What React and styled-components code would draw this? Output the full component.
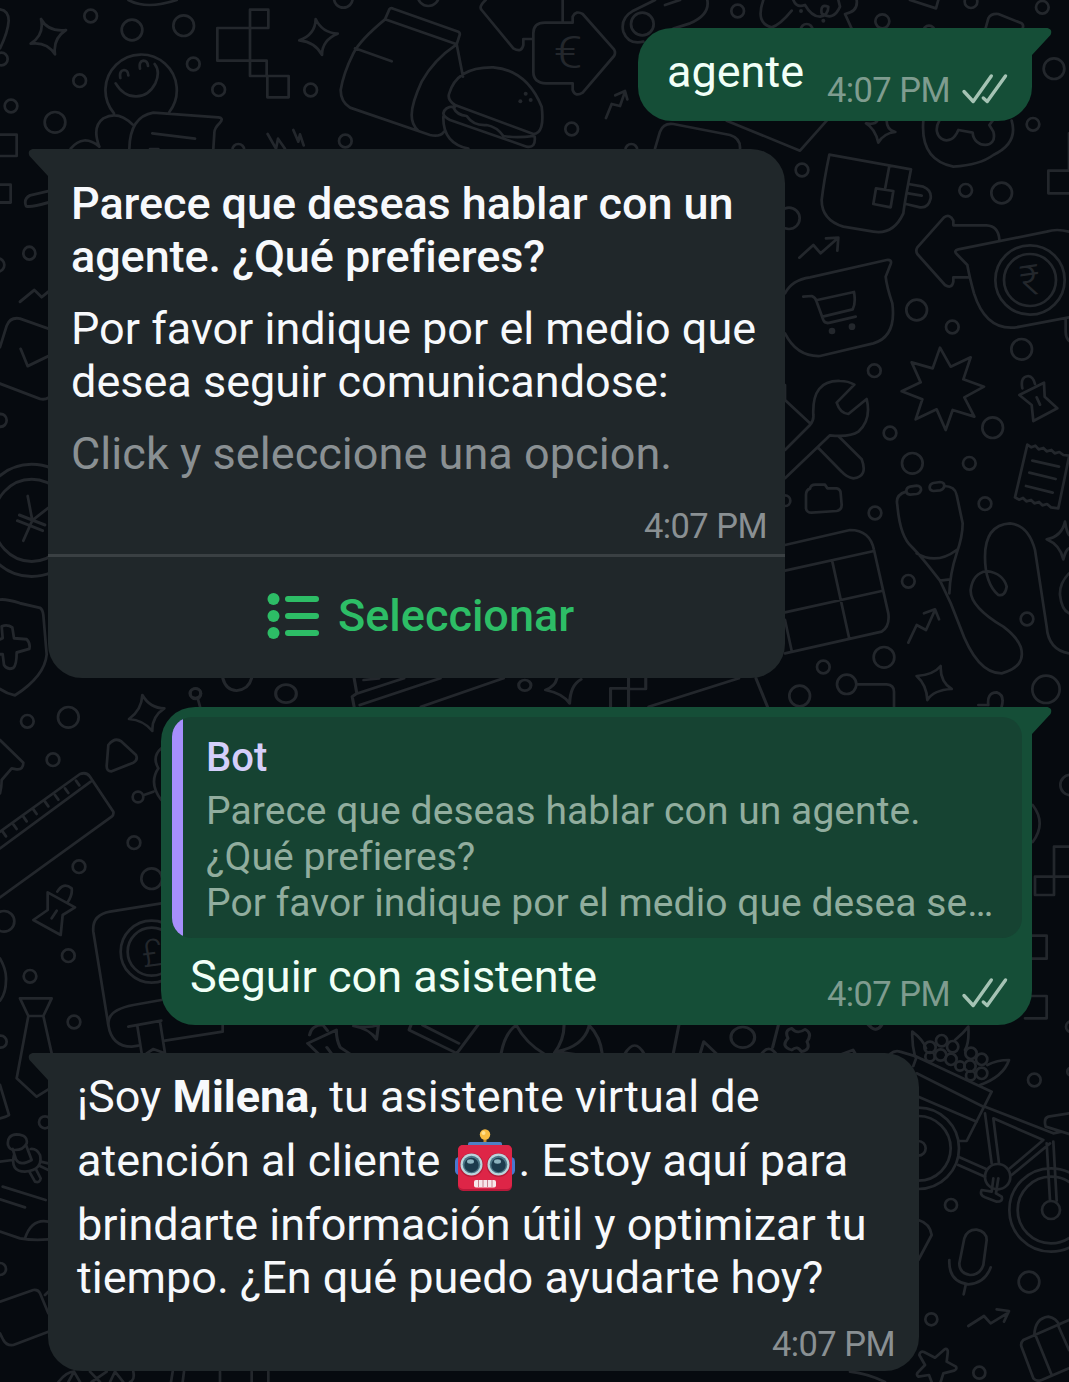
import React from "react";
import styled, { createGlobalStyle } from "styled-components";

const GlobalStyle = createGlobalStyle`
  *, *::before, *::after { box-sizing: border-box; }
  html, body { margin: 0; background: #060a0f; }
  body { font-family: Roboto, "Noto Sans", sans-serif; }
`;

const Screen = styled.main`
  position: relative;
  width: 1069px;
  height: 1382px;
  overflow: hidden;
  background: #060a0f;
`;

const Doodles = styled.svg`
  position: absolute;
  inset: 0;
  fill: none;
  stroke: #23272c;
  stroke-linecap: round;
  stroke-linejoin: round;

  text {
    fill: #23272c;
    stroke: none;
    text-anchor: middle;
    font-family: Roboto, sans-serif;
  }
`;

const Thread = styled.section`
  position: relative;
  display: flex;
  flex-direction: column;
  gap: 28px;
  padding: 28px 37px 0 48px;
`;

const Bubble = styled.article`
  position: relative;
  display: flex;
  flex-direction: column;
  align-self: ${(p) => (p.$out ? "flex-end" : "flex-start")};
  width: ${(p) => p.$width}px;
  height: ${(p) => p.$height}px;
  margin-top: ${(p) => p.$drop || 0}px;
  border-radius: ${(p) => (p.$out ? "34px 0 34px 34px" : "0 34px 34px 34px")};
  background: ${(p) => (p.$out ? "#154e37" : "#20272a")};
  color: ${(p) => (p.$out ? "#f1fff7" : "#f7f9fc")};
  white-space: nowrap;
`;

const TailShape = styled.svg`
  position: absolute;
  top: 0;
  ${(p) => (p.$out ? "right: -20px;" : "left: -20px; transform: scaleX(-1);")}
  fill: ${(p) => (p.$out ? "#154e37" : "#20272a")};
`;

const Text = styled.p`
  margin: 0;
  font-size: 45px;
  line-height: 53px;
  letter-spacing: ${(p) => p.$track || 0}px;
  font-weight: ${(p) => (p.$strong ? 500 : 400)};
  color: ${(p) => (p.$muted ? "#8a9093" : "inherit")};

  b { font-weight: 700; }
`;

const InlineRow = styled.div`
  display: flex;
  flex: 1;
  justify-content: space-between;
  padding: ${(p) => p.$pad};
`;

const Stack = styled.div`
  display: flex;
  flex-direction: column;
  gap: 19px;
  height: ${(p) => p.$height}px;
  padding: ${(p) => p.$pad};
`;

const Meta = styled.div`
  display: flex;
  align-items: center;
  align-self: flex-end;
  gap: 11px;
  margin-top: auto;
  color: ${(p) => (p.$out ? "#7f9c8f" : "#8a9093")};
  font-size: 34.5px;
  letter-spacing: -0.55px;
  line-height: 40px;
`;

const TickIcon = styled.svg`
  margin-bottom: 5px;
  fill: none;
  stroke: #a5c3b4;
  stroke-width: 3.4;
  stroke-linecap: round;
  stroke-linejoin: round;
`;

const ListButton = styled.button`
  display: flex;
  flex: 1;
  align-items: center;
  gap: 18px;
  padding: 0 0 4px 219px;
  border: 0;
  border-top: 3px solid #3a4043;
  background: none;
  color: #2dbd66;
  font: 500 45px/53px Roboto, sans-serif;
`;

const Quote = styled.blockquote`
  display: flex;
  width: 850px;
  height: 221px;
  margin: 10px 0 0 11px;
  overflow: hidden;
  border-radius: 20px;
  background: #164332;
`;

const QuoteBar = styled.span`
  width: 11px;
  background: #a68ffb;
`;

const QuoteBody = styled.div`
  padding: 18px 0 0 23px;
  color: #91ad9e;
  font-size: 39px;
  letter-spacing: 0.06px;
  line-height: 46px;
`;

const QuoteAuthor = styled.div`
  margin-bottom: 7px;
  color: #d5cffa;
  font-size: 40px;
  font-weight: 500;
`;

const Emoji = styled.svg`
  display: inline-block;
  width: 62px;
  height: 75px;
  margin: 0 3px 0 2px;
  vertical-align: -22px;
`;

const spots = [
  // circles grouped by wallpaper block, in block units
  { at: [0, 0], dots: [[272,48,19],[396,90,31],[551,77,31],[580,192,19],[239,242,19],[33,318,19],[165,367,31],[656,269,19],[932,270,19],[1036,423,19],[715,450,18],[4,177,19]],
    lines: "M0 28Q26 32 26 62Q24 96 0 145M123 57Q144 96 198 90Q158 116 165 163Q140 124 92 131Q134 104 123 57ZM947 57Q966 98 1013 101Q966 120 966 165Q946 126 898 121Q946 104 947 57ZM750 29h55v55h-55zM652 84h98v98h-98zM750 182h50v46h-50zM802 228h64v64h-64zM342 340A107 107 0 1 1 508 336M347 250C380 305 440 300 466 250Q482 215 464 192M361 234Q357 212 372 210Q384 210 385 226M420 206Q416 184 430 182Q443 182 444 198M298 440Q275 380 310 355Q355 330 398 374M212 446Q250 400 298 440M388 446Q390 350 460 338L655 352Q672 354 660 368Q642 385 643 400L640 446M457 400L585 416M450 447h25M803 402L828 446L834 416L855 446M880 390L895 425L900 403L911 436M385 0Q440 30 530 0M0 404H50V468H0" },
  { at: [340, 0], dots: [[265,-14,32],[10,-5,28],[695,387,19],[874,450,18]], fills: [[557,281,6],[541,304,6],[572,300,6]],
    lines: "M135 58L148 28Q152 22 160 26L355 95Q362 99 358 108L350 133ZM135 58Q60 120 40 160Q10 220 2 270Q2 305 30 323L270 405Q300 412 312 395M350 133Q280 180 245 245Q215 310 215 345Q215 375 235 392M350 133L369 230M45 145L155 184M327 282Q350 200 460 202Q560 210 605 320Q615 400 580 402L345 315Q322 300 327 282ZM345 320Q315 318 310 340Q310 350 330 360L560 440Q588 445 584 410M340 322Q350 345 380 348Q400 378 440 375Q470 380 490 408Q530 415 580 408M310 350Q308 430 385 446M580 215V100Q580 68 615 68H698V50Q708 30 728 42L822 148Q828 158 822 168L728 278Q706 292 698 270V250H618Q580 248 580 215ZM668 0V68M437 0Q415 20 425 30L520 145Q545 160 550 135V117H580M798 354L815 312L840 318L855 275M826 286L855 273L862 298M975 15L1020 0" },
  { at: [620, 0], dots: [[67,72,34],[353,33,19],[787,64,21],[1053,5,19],[1267,22,19],[1302,206,31],[1239,373,19],[546,510,19],[1037,571,19],[1145,579,31],[507,655,32],[927,95,18],[560,90,18]], fills: [[543,33,6],[610,62,6]],
    lines: "M105 0L40 32Q0 55 10 95Q25 135 70 125M160 86L210 70Q270 45 262 0M105 446L120 395Q130 368 160 372L330 405Q362 415 360 446M430 0Q405 70 455 82Q480 75 515 32M520 0Q530 25 555 15Q575 50 600 50Q625 45 625 20Q600 10 605 40Q640 65 660 20L655 0M710 0Q715 35 675 42L695 86M870 0L948 25L955 0M1097 84L1105 55Q1112 40 1135 42L1205 70Q1212 76 1208 84M320 362L540 452L620 362M800 362Q800 390 826 396Q790 400 775 428Q765 385 738 370Q765 375 772 362M910 362Q900 480 1000 500Q1080 495 1120 465Q1195 430 1175 362M958 362C930 410 985 445 1010 400L1015 390L1058 398C1060 445 1135 450 1120 395L1108 375L1118 362M628 464L873 508Q855 600 850 640Q820 705 760 695L670 680Q605 660 605 600Q612 540 628 464ZM808 498L795 568M768 565L820 573L812 622L760 612ZM865 552L910 560Q935 570 932 595Q925 625 900 622L858 612M865 580L905 587M1347 400V512H1285V580H1347" },
  { at: [770, 200], dots: [[440,330,31],[547,381,19],[313,512,19],[755,448,31],[668,683,31],[360,699,19],[780,240,104],[780,240,78]], fills: [[186,393,10],[246,380,10]],
    lines: "M88 173L130 135L152 160L203 115M168 115L205 113L202 152M688 118Q685 78 650 76H550V62Q540 40 522 52L442 142Q436 152 442 162L525 255Q545 268 550 245V232H598M897 95Q860 85 830 95L565 148Q550 152 560 162L592 195Q598 230 612 280Q650 400 750 380L897 352M887 358V395Q887 415 900 425M45 280Q65 240 120 232L350 180Q367 178 362 192L347 230Q350 260 367 310Q380 410 310 430L150 468Q80 470 45 400M100 290L125 288Q137 292 140 305L160 360Q165 372 180 368L257 350M142 300L252 276Q258 310 248 328L158 350M510 443L542 500L602 472L580 538L642 560L583 592L613 650L548 630L527 690L500 628L437 658L457 598L395 574L452 547L425 487L488 505ZM757 565Q750 530 775 528Q790 530 795 552M748 585L822 548L824 590L862 625L790 663L785 615ZM800 592L810 614M45 750L120 675Q132 660 130 645Q125 540 210 543Q235 543 253 554L200 608Q210 640 235 642L290 597Q305 660 265 695Q240 712 180 706L45 835M45 555V600L120 670M205 708L275 778Q295 830 250 835Q230 832 215 815L143 742" },
  { at: [770, 440], dots: [[427,70,31],[598,70,19],[645,191,19],[315,219,19],[415,424,19],[771,537,19],[342,652,31],[160,681,19],[230,733,29],[89,768,31],[828,748,41],[45,182,16]],
    lines: "M120 146Q122 134 136 134H165L172 145H200Q212 148 212 160L215 195Q215 210 200 213L125 218Q110 218 108 205V165Q108 150 120 146ZM772 14L735 172M897 50L865 205M772 14l12 8l12 -5l10 11l14 -4l10 10l14 -4l10 10l14 -4l12 9l17 2M735 172l12 7l12 -5l10 10l14 -4l10 10l14 -4l10 10l14 -4l12 10l22 3M787 62L867 80M778 98L857 117M768 138L848 158M45 315L240 270Q300 270 312 330L355 520Q360 560 335 575L45 640M45 392L312 333M45 517L335 453M187 365L238 597M45 540L65 632M408 155Q375 165 382 195Q390 290 425 320Q455 350 510 422Q545 490 570 560Q620 700 695 700Q770 680 752 620Q740 590 700 560Q600 500 602 450Q608 400 650 393Q700 400 710 440Q705 470 685 465Q645 430 645 350Q645 255 720 250Q775 255 795 330L830 560Q835 630 897 640M522 138Q555 138 560 165L578 250Q578 290 560 340Q540 400 538 460M440 340Q500 375 560 330M510 422L540 418M420 140L440 137Q454 138 453 150Q450 160 440 162L420 164Q408 162 409 152Q410 142 420 140ZM490 129L510 126Q524 127 523 139Q520 149 510 151L490 153Q478 151 479 141Q480 131 490 129ZM897 285Q890 275 885 245Q875 290 830 298Q870 315 880 358Q887 330 897 325M897 400Q868 430 870 465Q875 510 897 520M415 608L440 555L468 570L495 510M462 520L495 508L507 538M440 708Q490 705 512 678Q510 725 545 747Q490 750 472 780Q470 735 440 708ZM260 733H350Q372 735 372 755V800M655 795Q650 758 680 757Q705 765 695 800M625 795H655" },
  { at: [0, 140], scaleY: 2.8, dots: [[88,317,18],[-5,350,18],[2,785,18],[95,1065,157],[95,1065,115]],
    lines: "M0 125H32V175H0M145 143L90 155Q70 165 78 185Q90 190 145 175M60 453L103 420L125 440L145 425M0 580L20 520Q30 495 60 500L145 528M0 682L120 725Q135 728 145 722M62 585L83 633L145 605M83 997L97 1065L145 1030M97 1065L70 1122M58 1050L135 1078M52 1066L128 1094M0 1287Q20 1285 60 1297L120 1310Q128 1315 130 1330L140 1440Q135 1500 45 1555Q20 1550 0 1537M0 1398L8 1395L5 1362Q22 1355 37 1365L42 1395L80 1398Q92 1410 88 1425L50 1435Q50 1470 40 1478Q22 1485 12 1470L8 1440L0 1440" },
  { at: [0, 660], dots: [[82,184,19],[205,172,31],[159,299,19],[587,101,16],[414,411,16],[402,548,19],[237,620,19],[455,656,31],[205,887,19],[90,949,19],[222,1086,19],[12,784,31],[455,875,93],[455,875,72]],
    lines: "M427 105Q450 145 493 145Q455 170 457 213Q430 180 387 177Q425 150 427 105ZM325 255Q345 230 365 245L408 285Q415 300 400 308L335 334Q320 335 320 318ZM594 118L600 140M484 265Q455 290 475 325Q445 370 484 420M432 405L460 395M0 240L70 308Q70 330 50 328L35 325L5 360Q5 380 0 400M0 515L240 342Q260 335 270 350L340 455Q342 465 335 470L0 712M0 565L272 365M8 515l10 14M40 493l10 14M70 470l10 14M100 448l10 14M135 425l10 14M165 405l10 14M195 385l10 14M228 362l10 14M172 695Q190 665 215 685Q218 705 202 728M143 697L225 742L188 765L182 825L100 780L143 750ZM170 752L155 775M484 730L330 755Q275 765 280 815L325 1095M0 895Q20 930 18 960Q18 1000 0 1022M60 1015H155L130 1068H85ZM85 1068L50 1255L110 1310L145 1288M130 1068L155 1180" },
  { at: [0, 970], dots: [[2,215,18],[0,897,18],[135,457,18]],
    lines: "M484 90L400 105Q320 120 325 165Q335 230 395 230L415 227M385 170L484 152M412 168L425 250M480 155L495 250M440 250L460 237L490 248M495 212L668 185V165M0 345L27 435L18 440L0 445M24 525Q20 495 50 493Q85 495 80 520Q70 540 45 540Q28 540 24 525M38 537L48 568Q60 590 95 570L78 525M42 555Q30 605 75 605Q130 600 120 555Q110 535 92 537M88 605L105 635Q120 640 122 625L108 598M0 575L38 570M122 575L145 580M145 600L120 588M8 650L137 690M0 688L75 712M0 785L60 805Q100 812 145 808M75 805Q95 745 145 755M0 995L100 960Q115 958 120 970L145 1030M145 1085L40 1125Q20 1128 10 1110L0 1090M135 975L145 965M175 1236Q200 1205 222 1205L205 1236M222 1205L240 1236M270 1205L300 1236M320 1205L275 1236M330 1236L345 1205L370 1236M390 1236Q405 1230 400 1205M518 1205L513 1236M552 1205L548 1236M660 1205V1236M755 1205V1236M805 1205V1236" },
  { at: [180, 570], scaleX: 2.613, dots: [[277,371,27],[901,346,16],[40,370,14]],
    lines: "M112 325Q120 360 148 362Q180 358 187 325M455 325L462 370L450 380L455 410M480 330L520 325M465 370L585 325M470 405L680 325M630 410L845 325M985 325Q980 350 955 360Q1000 370 1018 400Q1020 345 1048 328M1125 410V355H1172V410M1172 325V357H1217V325M1225 410L1460 325M1505 325L1535 410" },
  { at: [850, 690], dots: [[662,285,31]],
    lines: "M548 345Q590 400 548 456M657 470H612V615H555V560H657M612 560V615" },
  { at: [850, 930], dots: [[553,450,19],[303,825,18],[537,1056,31],[244,1168,18],[388,1328,18],[603,840,27],[603,840,125],[603,840,100],[205,655,22],[205,655,122],[205,655,97],[77,280,18],[443,740,38],[664,290,16],[664,425,12],[240,352,17],[275,332,17],[308,350,17],[272,375,17],[240,380,14],[303,388,17],[363,370,17],[395,388,17],[360,408,17],[330,408,14],[395,430,17],[362,437,14]],
    lines: "M545 17H590V86H545M545 198H590V265H525M120 372Q135 360 150 365L200 380L425 485L350 633H325M200 380L190 408M200 430L400 530M205 500L380 575M195 380Q185 340 187 305Q220 330 228 355M315 330Q340 310 355 290Q358 340 345 360M412 405Q440 390 477 390Q460 440 390 465M405 530L610 610L635 605M405 550L425 700M430 565L447 700M430 565L580 630L480 715M590 640L600 812M610 635L620 812M600 640L485 735M325 680L410 718M325 705L405 740M657 550L595 560Q580 565 587 590L635 605L657 612M430 745L425 785L395 780Q388 795 405 802L440 815Q460 815 455 800L438 790L445 745M205 870Q240 880 245 915L205 990M343 925Q352 898 380 899Q410 905 410 930L400 1005Q390 1035 360 1035Q328 1030 328 1000ZM298 990Q295 1055 355 1063Q405 1060 422 1012M347 1065L341 1093M355 1188L402 1158L422 1180L475 1148M440 1138L477 1143L462 1175M657 1170L520 1230Q510 1240 515 1252L550 1345Q560 1356 575 1350L657 1315M555 1212L605 1335M625 1188L657 1260M553 1215Q555 1165 595 1160Q620 1165 627 1185M245 1356L237 1335L205 1340Q198 1335 203 1328L225 1305L208 1275Q210 1262 222 1266L255 1283L285 1257Q295 1255 293 1270L290 1295L318 1310Q322 1318 312 1322L280 1330L272 1356M0 1325Q50 1330 105 1356" },
  { at: [300, 960], scaleX: 2.613, dots: [[1157,232,31]],
    lines: "M25 225Q30 195 60 195L72 212M50 283L20 250L95 210Q95 240 105 262L135 285M70 262L85 285M140 198Q180 205 205 195L200 238Q180 205 140 198M290 195L285 210L410 280L465 195M320 195L415 250M525 283Q535 220 565 195Q590 250 640 283M690 195Q690 240 665 278M755 195Q785 230 790 283M755 200Q740 260 670 275L720 283M848 283Q875 230 900 283M990 195L975 283M1045 283L1055 245L1090 283M1250 195L1235 262M1205 283Q1225 250 1245 283M1285 205Q1265 210 1275 235Q1255 260 1285 270Q1300 255 1310 275Q1335 270 1325 245Q1340 220 1320 208Q1300 225 1285 205M1415 283L1445 270L1452 283M1485 195Q1505 220 1520 195" },
];

function Wallpaper() {
  return (
    <Doodles width="1069" height="1382" viewBox="0 0 1069 1382" aria-hidden="true">
      {spots.map(({ at, scaleX = 3, scaleY = 3, dots, fills = [], lines }, i) => (
        <g key={i} strokeWidth="8.2" transform={`translate(${at[0]} ${at[1]}) scale(${1 / scaleX} ${1 / scaleY})`}>
          {dots.map(([cx, cy, r], k) => <circle key={k} cx={cx} cy={cy} r={r} />)}
          {fills.map(([cx, cy, r], k) => <circle key={k} cx={cx} cy={cy} r={r} fill="#23272c" stroke="none" />)}
          <path d={lines} />
        </g>
      ))}
      <text x="568" y="68" fontSize="44" fontWeight="300" textLength="29" lengthAdjust="spacingAndGlyphs">€</text>
      <text x="1030" y="295" fontSize="42" fontWeight="300" transform="rotate(-8 1030 280)">₹</text>
      <text x="152" y="966" fontSize="38" fontWeight="300" transform="rotate(-8 152 952)">£</text>
    </Doodles>
  );
}

function Tail({ $out }) {
  return (
    <TailShape $out={$out} width="21" height="30" viewBox="0 0 21 30">
      <path d="M0 0H16.5Q22 1.5 19.5 7L1 27V30H0Z" />
    </TailShape>
  );
}

function Time({ $out }) {
  return (
    <Meta $out={$out}>
      <span>4:07 PM</span>
      {$out && (
        <TickIcon width="48" height="34" viewBox="0 0 48 34">
          <path d="M3 20.5L12.2 30.5L30.3 5M22.3 27L26.2 30.5L44.5 5" />
        </TickIcon>
      )}
    </Meta>
  );
}

function ListIcon() {
  return (
    <svg width="53" height="48" viewBox="0 0 53 48" fill="#2dbd66">
      {[7, 24, 41].map((y) => (
        <g key={y}>
          <circle cx="6.5" cy={y} r="6" />
          <rect x="18" y={y - 3} width="34" height="6" rx="3" />
        </g>
      ))}
    </svg>
  );
}

function Robot() {
  return (
    <Emoji viewBox="0 0 62 75" role="img" aria-label="robot">
      <path d="M31 16V23" stroke="#c58a2b" strokeWidth="3" />
      <circle cx="31" cy="11.500" r="5.200" fill="#f8bd42" />
      <circle cx="29.500" cy="10" r="2" fill="#ffe08b" />
      <rect x="14" y="19" width="34" height="7" rx="2" fill="#4f80c4" />
      <rect x="1" y="34" width="9" height="18" rx="4.500" fill="#4a78cf" />
      <rect x="52" y="34" width="9" height="18" rx="4.500" fill="#4a78cf" />
      <rect x="4" y="22" width="54" height="46" rx="5" fill="#b9193a" />
      <rect x="4" y="22" width="54" height="44" rx="5" fill="#de2547" />
      {[18, 45].map((x) => (
        <g key={x}>
          <circle cx={x - 0.5} cy="42" r="12" fill="#b71c38" />
          <circle cx={x - 0.5} cy="41.500" r="11" fill="#b9d5dc" />
          <circle cx={x - 0.5} cy="41.500" r="8.800" fill="#4d7787" />
          <circle cx={x - 0.5} cy="42" r="7.200" fill="#1c3b4d" />
          <ellipse cx={x - 1.5} cy="38.500" rx="3.500" ry="2.200" fill="#8cb3bf" />
        </g>
      ))}
      <rect x="20" y="57" width="22" height="7.500" rx="2" fill="#f7e7ea" />
      <path d="M24.500 57v7M29 57v7M33.500 57v7M38 57v7" stroke="#c9808e" strokeWidth="1" />
    </Emoji>
  );
}

export default function App() {
  return (
    <Screen>
      <GlobalStyle />
      <Wallpaper />
      <Thread>
        <Bubble $out $width={394} $height={93}>
          <Tail $out />
          <InlineRow $pad="17px 23px 11px 29px">
            <Text>agente</Text>
            <Time $out />
          </InlineRow>
        </Bubble>

        <Bubble $width={737} $height={529}>
          <Tail />
          <Stack $height={405} $pad="28px 18px 8px 23px">
            <Text $strong $track={-0.08}>Parece que deseas hablar con un<br />agente. ¿Qué prefieres?</Text>
            <Text>Por favor indique por el medio que<br />desea seguir comunicandose:</Text>
            <Text $muted $track={0.05}>Click y seleccione una opcion.</Text>
            <Time />
          </Stack>
          <ListButton type="button">
            <ListIcon />
            <span>Seleccionar</span>
          </ListButton>
        </Bubble>

        <Bubble $out $width={871} $height={318} $drop={1}>
          <Tail $out />
          <Quote>
            <QuoteBar />
            <QuoteBody>
              <QuoteAuthor>Bot</QuoteAuthor>
              Parece que deseas hablar con un agente.<br />
              ¿Qué prefieres?<br />
              Por favor indique por el medio que desea se…
            </QuoteBody>
          </Quote>
          <InlineRow $pad="12px 23px 11px 29px">
            <Text>Seguir con asistente</Text>
            <Time $out />
          </InlineRow>
        </Bubble>

        <Bubble $width={871} $height={318}>
          <Tail />
          <Stack $height={318} $pad="17px 24px 7px 29px">
            <Text>
              ¡Soy <b>Milena</b>, tu asistente virtual de<br />
              atención al cliente <Robot />. Estoy aquí para<br />
              brindarte información útil y optimizar tu<br />
              tiempo. ¿En qué puedo ayudarte hoy?
            </Text>
            <Time />
          </Stack>
        </Bubble>
      </Thread>
    </Screen>
  );
}
